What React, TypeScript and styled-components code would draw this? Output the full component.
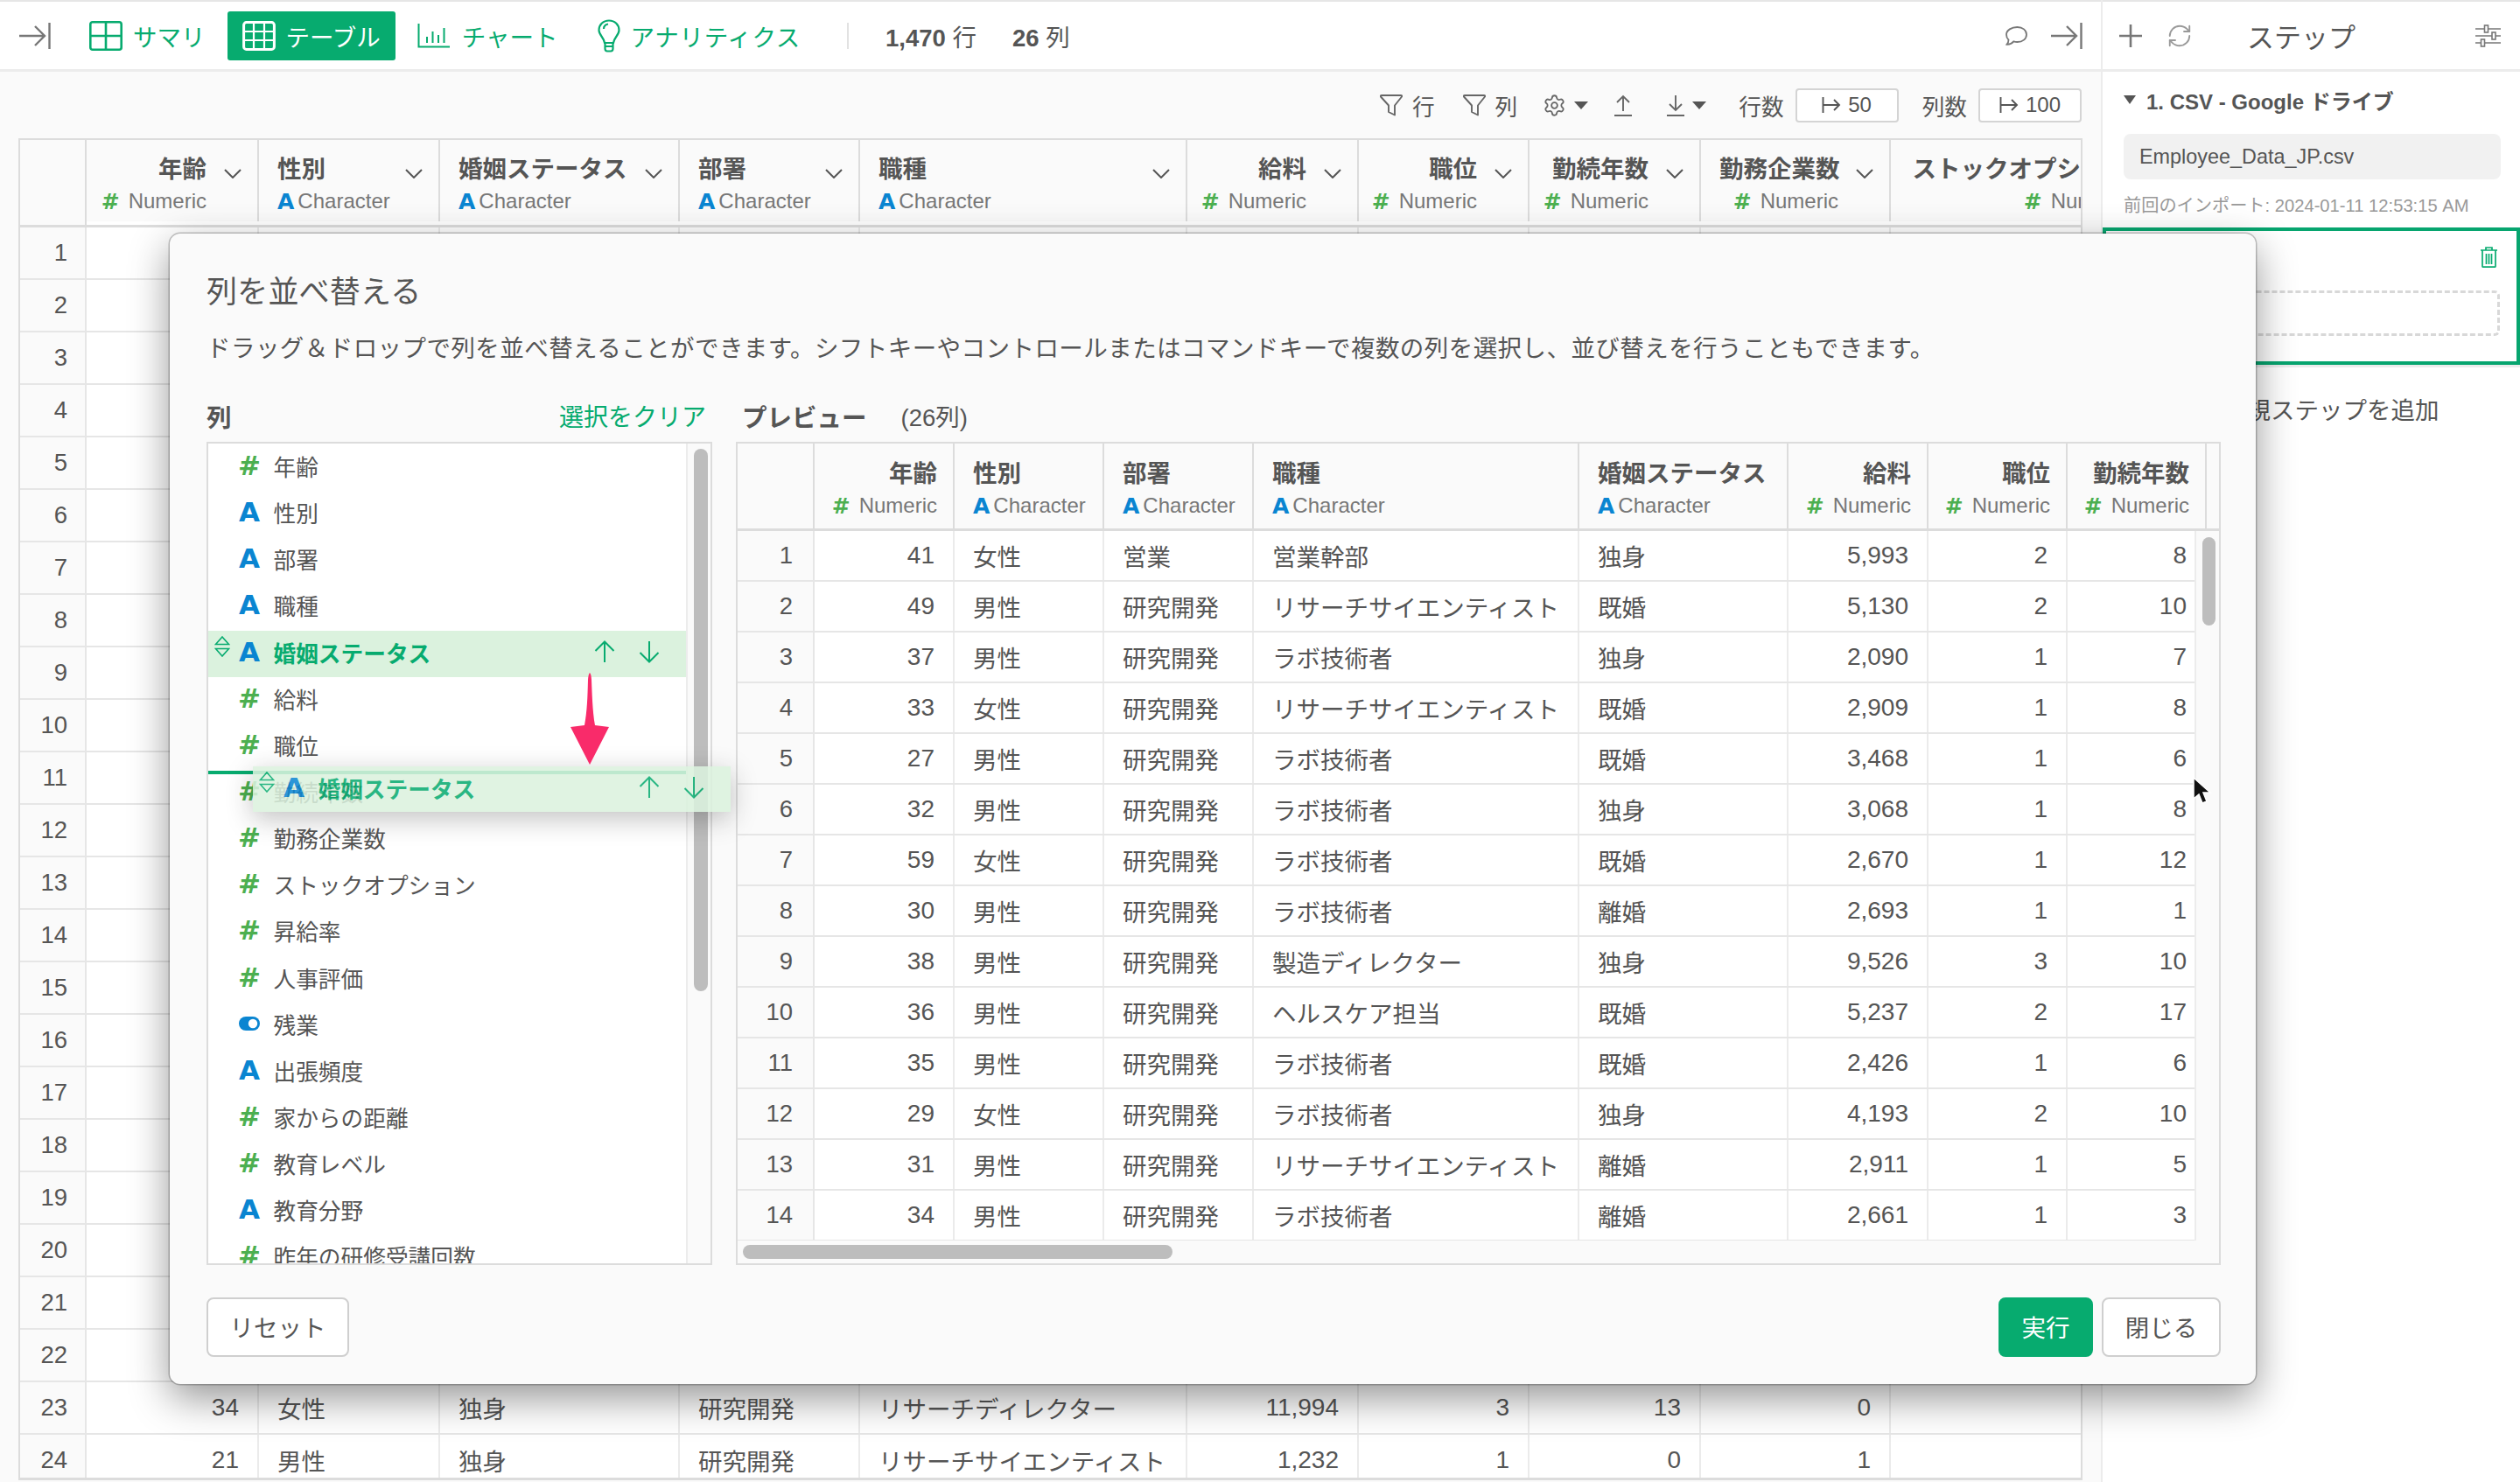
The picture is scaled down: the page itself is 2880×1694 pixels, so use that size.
import React from 'react';
import styled, { createGlobalStyle } from 'styled-components';
import { Settings, RefreshCw } from 'lucide-react';

const GREEN = '#07ab6f';
const TEXT = '#555555';

const Global = createGlobalStyle`
  html, body { margin: 0; padding: 0; background: #fff; }
  #root { width: 2880px; height: 1694px; }
  * { box-sizing: border-box; }
`;

const Page = styled.div`
  position: relative;
  width: 2880px;
  height: 1694px;
  overflow: hidden;
  display: flex;
  font-family: "Liberation Sans", "Noto Sans CJK JP", sans-serif;
  font-size: 27.5px;
  color: ${TEXT};
  background: #fff;
`;

const MainColumn = styled.div`
  width: 2401px;
  height: 100%;
  display: flex;
  flex-direction: column;
  background: #fafafa;
`;

const TopBar = styled.div`
  height: 82px;
  flex: none;
  display: flex;
  align-items: center;
  padding: 0 21px 0 22px;
  background: #fff;
  border-top: 2px solid #e6e6e6;
  border-bottom: 3px solid #ececec;
`;

const TabList = styled.div`
  display: flex;
  align-items: center;
  gap: 8px;
  margin-left: 27px;
`;

const Tab = styled.div<{ $active?: boolean; $gap?: number; $ml?: number; $ls?: number }>`
  height: 56px;
  display: flex;
  align-items: center;
  gap: ${p => p.$gap ?? 12}px;
  margin-left: ${p => p.$ml ?? 0}px;
  letter-spacing: ${p => p.$ls ?? 0}px;
  padding: 0 17px;
  border-radius: 3px;
  color: ${p => (p.$active ? '#fff' : GREEN)};
  background: ${p => (p.$active ? GREEN : 'transparent')};
`;

const VDivider = styled.div`
  width: 2px;
  height: 30px;
  background: #e2e2e2;
  margin: 0 42px 0 36px;
`;

const Stat = styled.span`
  margin-right: 41px;
  b { font-weight: 700; }
`;

const BarEnd = styled.div`
  margin-left: auto;
  display: flex;
  align-items: center;
  gap: 27px;
`;

const Toolbar = styled.div`
  height: 76px;
  flex: none;
  display: flex;
  align-items: center;
  justify-content: flex-end;
  padding-right: 22px;
  font-size: 25.7px;
`;

const ToolItem = styled.div<{ $ml?: number; $gap?: number }>`
  display: flex;
  align-items: center;
  gap: ${p => p.$gap ?? 11}px;
  margin-left: ${p => p.$ml ?? 0}px;
`;

const NumBox = styled.div`
  width: 118px;
  height: 39px;
  display: flex;
  align-items: center;
  justify-content: center;
  gap: 8px;
  margin-left: 13px;
  background: #fff;
  border: 2px solid #d4d4d4;
  border-radius: 4px;
  font-size: 24px;
`;

const MainTable = styled.div`
  margin-left: 21px;
  width: 2359px;
  height: 1534px;
  overflow: hidden;
  border: 2px solid #dcdcdc;
  border-bottom-width: 3px;
  background: #fff;
`;

const Row = styled.div<{ $cols: string; $h: number; $head?: boolean }>`
  display: grid;
  grid-template-columns: ${p => p.$cols};
  height: ${p => p.$h}px;
  width: max-content;
  border-bottom: ${p => (p.$head ? '3px solid #dcdcdc' : '2px solid #e6e6e6')};
`;

const HeadCell = styled.div<{ $pt?: number }>`
  display: flex;
  min-width: 0;
  padding: ${p => p.$pt ?? 15}px 18px 0 21px;
  background: #fafafa;
  border-right: 2px solid #dcdcdc;
`;

const HeadBody = styled.div<{ $num?: boolean }>`
  flex: 1;
  min-width: 0;
  text-align: ${p => (p.$num ? 'right' : 'left')};
`;

const HeadName = styled.div`
  height: 37px;
  line-height: 37px;
  font-weight: 700;
  white-space: nowrap;
`;

const HeadType = styled.div<{ $num?: boolean }>`
  height: 36px;
  display: flex;
  align-items: center;
  justify-content: ${p => (p.$num ? 'flex-end' : 'flex-start')};
  gap: ${p => (p.$num ? 10 : 4)}px;
  font-size: 24px;
  color: #777;
  white-space: nowrap;
`;

const Chevron = styled.svg`
  flex: none;
  width: 20px;
  height: 11px;
  margin: 18px 0 0 20px;
  fill: none;
  stroke: #555;
  stroke-width: 2;
`;

const TypeMark = styled.span<{ $kind: 'num' | 'chr'; $size: number }>`
  display: inline-block;
  font-family: "DejaVu Sans", sans-serif;
  font-weight: 700;
  font-size: ${p => p.$size}px;
  line-height: 1;
  color: ${p => (p.$kind === 'num' ? '#4caf50' : '#0a85d1')};
`;

const Corner = styled.div`
  background: #fafafa;
  border-right: 2px solid #dcdcdc;
`;

const RowNo = styled.div<{ $pad: number }>`
  display: flex;
  align-items: center;
  justify-content: flex-end;
  padding-right: ${p => p.$pad}px;
  background: #fafafa;
  border-right: 2px solid #e6e6e6;
`;

const Cell = styled.div<{ $num?: boolean }>`
  display: flex;
  align-items: center;
  justify-content: ${p => (p.$num ? 'flex-end' : 'flex-start')};
  padding: 0 21px;
  min-width: 0;
  font-size: ${p => (p.$num ? 28 : 27.5)}px;
  white-space: nowrap;
  background: #fff;
  border-right: 2px solid #ebebeb;
`;

const Side = styled.div`
  width: 479px;
  height: 100%;
  flex: none;
  background: #fff;
  border-left: 2px solid #ececec;
`;

const SideHead = styled.div`
  height: 82px;
  display: flex;
  align-items: center;
  padding: 0 22px 0 19px;
  border-top: 2px solid #e6e6e6;
  border-bottom: 3px solid #ececec;
`;

const SideTitle = styled.div`
  margin-left: 62px;
  font-size: 31px;
  flex: 1;
`;

const SideBody = styled.div`
  padding: 0 22px 0 24px;
`;

const StepTitle = styled.div`
  display: flex;
  align-items: center;
  gap: 12px;
  height: 36px;
  margin-top: 14px;
  font-size: 24px;
  font-weight: 700;
`;

const Caret = styled.span`
  width: 0;
  height: 0;
  border-left: 7px solid transparent;
  border-right: 7px solid transparent;
  border-top: 10px solid ${TEXT};
`;

const FileField = styled.div`
  height: 52px;
  margin-top: 21px;
  padding-left: 18px;
  display: flex;
  align-items: center;
  background: #f1f1f1;
  border-radius: 8px;
  font-size: 23.4px;
`;

const ImportMeta = styled.div`
  margin-top: 17px;
  height: 26px;
  line-height: 26px;
  font-size: 20.2px;
  color: #999;
  white-space: nowrap;
`;

const StepCard = styled.div`
  height: 157px;
  margin-top: 12px;
  padding: 18px 19px 0 22px;
  border: 4px solid #07a56f;
  box-shadow: 0 3px 0 #ececec;
`;

const TrashRow = styled.div`
  display: flex;
  justify-content: flex-end;
  padding-right: 3px;
  height: 24px;
`;

const DashedSlot = styled.div`
  height: 52px;
  margin-top: 26px;
  border: 3px dashed #d8d8d8;
  border-radius: 6px;
`;

const AddStep = styled.div`
  margin-top: 33px;
  padding-left: 137px;
  height: 40px;
  line-height: 40px;
  white-space: nowrap;
`;

const Modal = styled.div`
  position: absolute;
  left: 194px;
  top: 267px;
  width: 2384px;
  height: 1315px;
  padding: 45px 40px 0 42px;
  background: #fafafa;
  border-radius: 12px;
  box-shadow: 0 0 0 1.5px rgba(0, 0, 0, 0.22), 0 16px 46px rgba(0, 0, 0, 0.42);
`;

const Title = styled.div`
  height: 44px;
  line-height: 44px;
  font-size: 35px;
  letter-spacing: 0.2px;
`;

const Description = styled.div`
  height: 40px;
  line-height: 40px;
  margin-top: 23px;
  letter-spacing: 0.44px;
  white-space: nowrap;
`;

const Columns = styled.div`
  display: flex;
  gap: 27px;
  margin-top: 37px;
`;

const ListCol = styled.div`
  width: 578px;
  flex: none;
`;

const PreviewCol = styled.div`
  width: 1697px;
  flex: none;
`;

const LabelRow = styled.div<{ $pl?: number; $pr?: number }>`
  height: 38px;
  margin-bottom: 11px;
  display: flex;
  align-items: center;
  justify-content: space-between;
  padding: 0 ${p => p.$pr ?? 0}px 0 ${p => p.$pl ?? 0}px;
  font-size: 28px;
`;

const PanelLabel = styled.div`
  font-weight: 700;
  font-size: 28.5px;
`;

const ClearLink = styled.div`
  color: ${GREEN};
`;

const CountNote = styled.span`
  margin-left: 39px;
  font-size: 27.5px;
  flex: 1;
`;

const ListPanel = styled.div`
  position: relative;
  height: 941px;
  display: flex;
  overflow: hidden;
  background: #fff;
  border: 2px solid #dcdcdc;
`;

const ListScroll = styled.div`
  width: 546px;
  padding-top: 1px;
  flex: none;
  overflow: hidden;
`;

const ListTrack = styled.div`
  flex: 1;
  padding: 6px 0 0 7px;
  background: #fafafa;
  border-left: 2px solid #ececec;
`;

const Thumb = styled.div<{ $w: number; $h: number }>`
  width: ${p => p.$w}px;
  height: ${p => p.$h}px;
  border-radius: 8px;
  background: #bdbdbd;
`;

const ListRow = styled.div<{ $on?: boolean; $drop?: boolean }>`
  position: relative;
  height: 53.15px;
  display: flex;
  align-items: center;
  padding: 0 30px 4px 7px;
  font-size: 25.7px;
  background: ${p => (p.$on ? '#dbf2de' : 'transparent')};
  color: ${p => (p.$on ? GREEN : TEXT)};
  font-weight: ${p => (p.$on ? 700 : 400)};
  white-space: nowrap;
  ${p =>
    p.$drop
      ? `&::before { content: ''; position: absolute; left: 0; right: 0; top: 1px; height: 4px; background: ${GREEN}; }`
      : ''}
`;

const Ghost = styled(ListRow)`
  position: absolute;
  left: 95px;
  top: 609px;
  width: 546px;
  height: 52px;
  opacity: 0.86;
  box-shadow: 0 8px 30px rgba(0, 0, 0, 0.28);
`;

const HandleSlot = styled.div`
  width: 28px;
  flex: none;
  margin-top: -7px;
`;

const MarkSlot = styled.div`
  width: 24px;
  flex: none;
  display: flex;
  align-items: center;
  justify-content: center;
`;

const RowLabel = styled.span`
  margin-left: 15.5px;
`;

const RowArrows = styled.div`
  margin-left: auto;
  display: flex;
  gap: 27px;
`;

const PreviewPanel = styled.div`
  height: 941px;
  overflow: hidden;
  background: #fafafa;
  border: 2px solid #dcdcdc;
`;

const PreviewBody = styled.div`
  display: flex;
`;

const PreviewRows = styled.div`
  width: 1665px;
  height: 811px;
  flex: none;
  overflow: hidden;
`;

const VTrack = styled.div`
  flex: 1;
  padding: 7px 0 0 7px;
  border-left: 2px solid #ececec;
`;

const HTrack = styled.div`
  padding: 5px 0 0 6px;
`;

const Footer = styled.div`
  display: flex;
  align-items: center;
  gap: 10px;
  height: 68px;
  margin-top: 37px;
`;

const Button = styled.div<{ $w: number; $primary?: boolean; $push?: boolean }>`
  width: ${p => p.$w}px;
  height: 68px;
  display: flex;
  align-items: center;
  justify-content: center;
  padding-bottom: 3px;
  margin-left: ${p => (p.$push ? 'auto' : '0')};
  border-radius: 8px;
  color: ${p => (p.$primary ? '#fff' : TEXT)};
  background: ${p => (p.$primary ? GREEN : '#fff')};
  border: 2px solid ${p => (p.$primary ? GREEN : '#cfcfcf')};
`;

const PinkArrow = styled.svg`
  position: absolute;
  left: 456px;
  top: 502px;
  width: 48px;
  height: 106px;
`;

const Cursor = styled.svg`
  position: absolute;
  left: 2310px;
  top: 621px;
  width: 24px;
  height: 34px;
`;

const TinyCaret = styled.span`
  width: 0;
  height: 0;
  border-left: 8px solid transparent;
  border-right: 8px solid transparent;
  border-top: 9px solid #555;
`;

/* ---------- drawings ---------- */

const ArrowToBar = () => (
  <svg width="36" height="30" viewBox="0 0 36 30" fill="none" stroke="#777" strokeWidth="2.4">
    <path d="M0 15H29M18 4l11 11-11 11" />
    <path d="M34.500 0V30" />
  </svg>
);
const SummaryIcon = () => (
  <svg width="38" height="34" viewBox="0 0 38 34" fill="none" stroke={GREEN} strokeWidth="2.600">
    <rect x="1.300" y="1.300" width="35.400" height="31.400" rx="2.500" />
    <path d="M1 17H37M19 1V33" />
  </svg>
);
const TableIcon = () => (
  <svg width="38" height="34" viewBox="0 0 38 34" fill="none" stroke="#fff" strokeWidth="2.200">
    <rect x="1.600" y="1.600" width="34.800" height="30.800" rx="3" strokeWidth="3" />
    <path d="M1 12H37M1 22H37M13 1V33M25 1V33" />
  </svg>
);
const ChartIcon = () => (
  <svg width="37" height="28" viewBox="0 0 37 28" fill="none" stroke={GREEN} strokeWidth="2">
    <path d="M1.500 0V26.500H37" />
    <path d="M11 15V22M17.500 9V22M24 13V22M30.500 5V22" />
  </svg>
);
const BulbIcon = () => (
  <svg width="26" height="38" viewBox="0 0 26 38" fill="none" stroke={GREEN} strokeWidth="2.200">
    <path d="M13 1.500C6 1.500 1.500 6.500 1.500 12.500c0 5.500 5.500 8 6.500 14.500h10c1-6.500 6.500-9 6.500-14.500C24.500 6.500 20 1.500 13 1.500Z" />
    <path d="M7 11c0-3 2-5 5-5.500M8.500 27v6.500q0 3 2.500 3h4q2.500 0 2.500-3V27M8.500 31h9" />
  </svg>
);
const ChatIcon = () => (
  <svg width="25" height="22" viewBox="0 0 25 22" fill="none" stroke="#777" strokeWidth="1.800">
    <path d="M13.500 1c6 0 10.500 3.500 10.500 8.500S19.500 18 13.500 18c-1.500 0-2.900-.2-4.200-.6C7.500 19.500 4 21 1.500 20.800c1.200-1.300 2-3 2-5.300C1.800 14 1 12 1 9.500 1 4.500 7 1 13.500 1Z" />
  </svg>
);
const PlusIcon = () => (
  <svg width="26" height="26" viewBox="0 0 26 26" stroke="#777" strokeWidth="2.600">
    <path d="M13 0V26M0 13H26" />
  </svg>
);
const SlidersIcon = () => (
  <svg width="29" height="26" viewBox="0 0 29 26" fill="#fff" stroke="#777" strokeWidth="1.600">
    <path d="M0 5H29M0 13H29M0 21H29" />
    <rect x="10.500" y="1" width="4" height="8" />
    <rect x="19" y="9" width="4" height="8" />
    <rect x="6.500" y="17" width="4" height="8" />
  </svg>
);
const FunnelIcon = () => (
  <svg width="26" height="25" viewBox="0 0 26 25" fill="none" stroke="#666" strokeWidth="1.900" strokeLinejoin="round">
    <path d="M2 1H24Q25.500 1 25 2.500L17 12.500V23.500L10 20V12.500L1 2.500Q.5 1 2 1Z" />
  </svg>
);
const UpLoad = () => (
  <svg width="20" height="25" viewBox="0 0 20 25" fill="none" stroke="#666" strokeWidth="1.900">
    <path d="M10 19V2M3 9l7-7 7 7M0 24H20" />
  </svg>
);
const DownLoad = () => (
  <svg width="20" height="25" viewBox="0 0 20 25" fill="none" stroke="#666" strokeWidth="1.900">
    <path d="M10 1V18M3 11l7 7 7-7M0 24H20" />
  </svg>
);
const LimitIcon = () => (
  <svg width="22" height="20" viewBox="0 0 22 20" fill="none" stroke="#555" strokeWidth="1.900">
    <path d="M1.500 1V19M1.500 10H20M14 4l6 6-6 6" />
  </svg>
);
const TrashIcon = () => (
  <svg width="19" height="24" viewBox="0 0 19 24" fill="none" stroke={GREEN} strokeWidth="1.700">
    <path d="M0 4H19M6 4V1H13V4M2 4V22.500Q2 23.200 3 23.200H16Q17 23.200 17 22.500V4M6.500 8V20M9.500 8V20M12.500 8V20" />
  </svg>
);
const Handle = () => (
  <svg width="18" height="24" viewBox="0 0 18 24" fill="none" stroke={GREEN} strokeWidth="1.600">
    <path d="M9 1L16.500 9.500H1.500ZM9 23L16.500 14.500H1.500Z" />
  </svg>
);
const Up = () => (
  <svg width="24" height="26" viewBox="0 0 24 26" fill="none" stroke={GREEN} strokeWidth="2">
    <path d="M12 25V1.500M1.500 12L12 1.500 22.500 12" />
  </svg>
);
const Down = () => (
  <svg width="24" height="26" viewBox="0 0 24 26" fill="none" stroke={GREEN} strokeWidth="2">
    <path d="M12 1V24.500M1.500 14L12 24.500 22.500 14" />
  </svg>
);
const ToggleIcon = () => (
  <svg width="30" height="20" viewBox="0 0 30 20">
    <rect width="30" height="20" rx="10" fill="#0a85d1" />
    <circle cx="20" cy="10" r="6.500" fill="#fff" />
  </svg>
);

const Mark = ({ kind, size }: { kind: string; size: number }) =>
  kind === 'bool' ? (
    <ToggleIcon />
  ) : (
    <TypeMark $kind={kind === '#' ? 'num' : 'chr'} $size={size}>
      {kind === '#' ? '#' : 'A'}
    </TypeMark>
  );

/* ---------- data ---------- */

type Col = { name: string; num?: boolean };

const mainHead: Col[] = [
  { name: '年齢', num: true },
  { name: '性別' },
  { name: '婚姻ステータス' },
  { name: '部署' },
  { name: '職種' },
  { name: '給料', num: true },
  { name: '職位', num: true },
  { name: '勤続年数', num: true },
  { name: '勤務企業数', num: true },
  { name: 'ストックオプション', num: true },
];
const mainCols = '76px 197px 207px 274px 206px 374px 196px 195px 196px 217px 332px';

const mainRows: Record<number, string[]> = {
  23: ['34', '女性', '独身', '研究開発', 'リサーチディレクター', '11,994', '3', '13', '0', ''],
  24: ['21', '男性', '独身', '研究開発', 'リサーチサイエンティスト', '1,232', '1', '0', '1', ''],
};

const previewHead: Col[] = [
  { name: '年齢', num: true },
  { name: '性別' },
  { name: '部署' },
  { name: '職種' },
  { name: '婚姻ステータス' },
  { name: '給料', num: true },
  { name: '職位', num: true },
  { name: '勤続年数', num: true },
];
const previewCols = '88px 160px 171px 171px 372px 239px 160px 159px 159px 16px';

const R = 'リサーチサイエンティスト';
const L = 'ラボ技術者';
const D = '研究開発';
const previewRows: string[][] = [
  ['41', '女性', '営業', '営業幹部', '独身', '5,993', '2', '8'],
  ['49', '男性', D, R, '既婚', '5,130', '2', '10'],
  ['37', '男性', D, L, '独身', '2,090', '1', '7'],
  ['33', '女性', D, R, '既婚', '2,909', '1', '8'],
  ['27', '男性', D, L, '既婚', '3,468', '1', '6'],
  ['32', '男性', D, L, '独身', '3,068', '1', '8'],
  ['59', '女性', D, L, '既婚', '2,670', '1', '12'],
  ['30', '男性', D, L, '離婚', '2,693', '1', '1'],
  ['38', '男性', D, '製造ディレクター', '独身', '9,526', '3', '10'],
  ['36', '男性', D, 'ヘルスケア担当', '既婚', '5,237', '2', '17'],
  ['35', '男性', D, L, '既婚', '2,426', '1', '6'],
  ['29', '女性', D, L, '独身', '4,193', '2', '10'],
  ['31', '男性', D, R, '離婚', '2,911', '1', '5'],
  ['34', '男性', D, L, '離婚', '2,661', '1', '3'],
];

const listItems: [string, string][] = [
  ['#', '年齢'],
  ['A', '性別'],
  ['A', '部署'],
  ['A', '職種'],
  ['A', '婚姻ステータス'],
  ['#', '給料'],
  ['#', '職位'],
  ['#', '勤続年数'],
  ['#', '勤務企業数'],
  ['#', 'ストックオプション'],
  ['#', '昇給率'],
  ['#', '人事評価'],
  ['bool', '残業'],
  ['A', '出張頻度'],
  ['#', '家からの距離'],
  ['#', '教育レベル'],
  ['A', '教育分野'],
  ['#', '昨年の研修受講回数'],
];

const HeadCellView = ({ col }: { col: Col }) => (
  <HeadBody $num={col.num}>
    <HeadName>{col.name}</HeadName>
    <HeadType $num={col.num}>
      <Mark kind={col.num ? '#' : 'A'} size={25} />
      {col.num ? 'Numeric' : 'Character'}
    </HeadType>
  </HeadBody>
);

const SelectedRowContent = () => (
  <>
    <HandleSlot>
      <Handle />
    </HandleSlot>
    <MarkSlot>
      <Mark kind="A" size={31} />
    </MarkSlot>
    <RowLabel>婚姻ステータス</RowLabel>
    <RowArrows>
      <Up />
      <Down />
    </RowArrows>
  </>
);

export default function App() {
  return (
    <Page>
      <Global />
      <MainColumn>
        <TopBar>
          <ArrowToBar />
          <TabList>
            <Tab>
              <SummaryIcon />
              サマリ
            </Tab>
            <Tab $active>
              <TableIcon />
              テーブル
            </Tab>
            <Tab $gap={14}>
              <ChartIcon />
              チャート
            </Tab>
            <Tab $ml={3} $ls={0.7}>
              <BulbIcon />
              アナリティクス
            </Tab>
          </TabList>
          <VDivider />
          <Stat>
            <b>1,470</b> 行
          </Stat>
          <Stat>
            <b>26</b> 列
          </Stat>
          <BarEnd>
            <ChatIcon />
            <ArrowToBar />
          </BarEnd>
        </TopBar>
        <Toolbar>
          <ToolItem>
            <FunnelIcon />行
          </ToolItem>
          <ToolItem $ml={32}>
            <FunnelIcon />列
          </ToolItem>
          <ToolItem $ml={29} $gap={9}>
            <Settings size={27} strokeWidth={1.6} color="#666" />
            <TinyCaret />
          </ToolItem>
          <ToolItem $ml={30}>
            <UpLoad />
          </ToolItem>
          <ToolItem $ml={40} $gap={9}>
            <DownLoad />
            <TinyCaret />
          </ToolItem>
          <ToolItem $ml={37} $gap={0}>
            行数
            <NumBox>
              <LimitIcon />
              50
            </NumBox>
          </ToolItem>
          <ToolItem $ml={27} $gap={0}>
            列数
            <NumBox>
              <LimitIcon />
              100
            </NumBox>
          </ToolItem>
        </Toolbar>
        <MainTable>
          <Row $cols={mainCols} $h={100} $head>
            <Corner />
            {mainHead.map(c => (
              <HeadCell key={c.name}>
                <HeadCellView col={c} />
                <Chevron viewBox="0 0 20 11">
                  <path d="M1 1l9 9 9-9" />
                </Chevron>
              </HeadCell>
            ))}
            <Corner />
          </Row>
          {Array.from({ length: 24 }, (_, i) => i + 1).map(n => (
            <Row key={n} $cols={mainCols} $h={60}>
              <RowNo $pad={20}>{n}</RowNo>
              {mainHead.map((c, j) => (
                <Cell key={c.name} $num={c.num}>
                  {mainRows[n]?.[j] ?? ''}
                </Cell>
              ))}
            </Row>
          ))}
        </MainTable>
      </MainColumn>

      <Side>
        <SideHead>
          <PlusIcon />
          <RefreshCw size={30} strokeWidth={1.5} color="#999" style={{ marginLeft: 28 }} />
          <SideTitle>ステップ</SideTitle>
          <SlidersIcon />
        </SideHead>
        <SideBody>
          <StepTitle>
            <Caret />
            1. CSV - Google ドライブ
          </StepTitle>
          <FileField>Employee_Data_JP.csv</FileField>
          <ImportMeta>前回のインポート: 2024-01-11 12:53:15 AM</ImportMeta>
        </SideBody>
        <StepCard>
          <TrashRow>
            <TrashIcon />
          </TrashRow>
          <DashedSlot />
        </StepCard>
        <AddStep>新規ステップを追加</AddStep>
      </Side>

      <Modal>
        <Title>列を並べ替える</Title>
        <Description>
          ドラッグ＆ドロップで列を並べ替えることができます。シフトキーやコントロールまたはコマンドキーで複数の列を選択し、並び替えを行うこともできます。
        </Description>
        <Columns>
          <ListCol>
            <LabelRow $pr={7}>
              <PanelLabel>列</PanelLabel>
              <ClearLink>選択をクリア</ClearLink>
            </LabelRow>
            <ListPanel>
              <ListScroll>
                {listItems.map(([kind, label], i) =>
                  i === 4 ? (
                    <ListRow key={label} $on>
                      <SelectedRowContent />
                    </ListRow>
                  ) : (
                    <ListRow key={label} $drop={i === 7}>
                      <HandleSlot />
                      <MarkSlot>
                        <Mark kind={kind} size={31} />
                      </MarkSlot>
                      <RowLabel>{label}</RowLabel>
                    </ListRow>
                  ),
                )}
              </ListScroll>
              <ListTrack>
                <Thumb $w={16} $h={620} />
              </ListTrack>
            </ListPanel>
          </ListCol>
          <PreviewCol>
            <LabelRow $pl={7}>
              <PanelLabel>プレビュー</PanelLabel>
              <CountNote>(26列)</CountNote>
            </LabelRow>
            <PreviewPanel>
              <Row $cols={previewCols} $h={100} $head>
                <Corner />
                {previewHead.map(c => (
                  <HeadCell key={c.name} $pt={16}>
                    <HeadCellView col={c} />
                  </HeadCell>
                ))}
                <Corner />
              </Row>
              <PreviewBody>
                <PreviewRows>
                  {previewRows.map((r, i) => (
                    <Row key={i} $cols={previewCols} $h={58}>
                      <RowNo $pad={23}>{i + 1}</RowNo>
                      {r.map((v, j) => (
                        <Cell key={j} $num={previewHead[j].num}>
                          {v}
                        </Cell>
                      ))}
                    </Row>
                  ))}
                </PreviewRows>
                <VTrack>
                  <Thumb $w={15} $h={101} />
                </VTrack>
              </PreviewBody>
              <HTrack>
                <Thumb $w={491} $h={16} />
              </HTrack>
            </PreviewPanel>
          </PreviewCol>
        </Columns>
        <Footer>
          <Button $w={163}>リセット</Button>
          <Button $w={108} $primary $push>
            実行
          </Button>
          <Button $w={136}>閉じる</Button>
        </Footer>
        <Ghost $on>
          <SelectedRowContent />
        </Ghost>
        <PinkArrow viewBox="0 0 48 106">
          <path d="M24 0c-1 1-1.500 3-2 8-.5 20-1 36-4 52L2 62 24 105 46 62 30 60C27 44 26.500 20 26 8 25.800 3 25 1 24 0Z" fill="#f92b6a" />
        </PinkArrow>
        <Cursor viewBox="0 0 24 34">
          <path d="M3 1V25L9 20 13 30 18 28 14 18 22 18Z" fill="#111" stroke="#fff" strokeWidth="1.500" />
        </Cursor>
      </Modal>
    </Page>
  );
}
